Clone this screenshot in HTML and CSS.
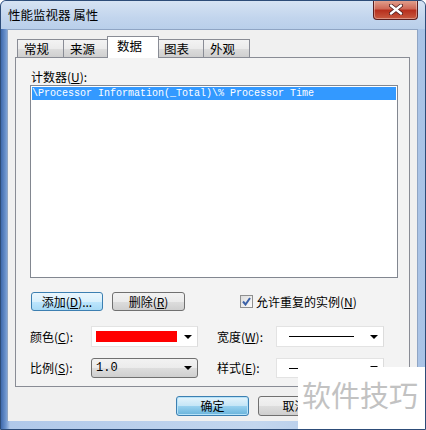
FILE: index.html
```html
<!DOCTYPE html>
<html lang="zh-CN">
<head>
    <meta charset="UTF-8">
    <title>性能监视器 属性</title>
    <link rel="stylesheet" href="styles.css">
</head>
<body>

<div class="window">
    <div class="titlebar">
        <span class="title">性能监视器 属性</span>
        <div class="close-btn">
            <svg width="14" height="11" viewBox="0 0 14 11">
                <path d="M2 1.5 L12 9.5 M12 1.5 L2 9.5" stroke="#4a1a1a" stroke-width="4" stroke-linecap="round"/>
                <path d="M2 1.5 L12 9.5 M12 1.5 L2 9.5" stroke="#fff" stroke-width="2.4" stroke-linecap="round"/>
            </svg>
        </div>
    </div>

    <div class="client">
        <div class="tabs">
            <div class="tab">常规</div>
            <div class="tab">来源</div>
            <div class="tab active">数据</div>
            <div class="tab">图表</div>
            <div class="tab">外观</div>
        </div>

        <div class="panel">
            <div class="field-label">计数器(<u>U</u>):</div>
            <div class="counter-list">
                <div class="counter-row selected">\Processor Information(_Total)\% Processor Time</div>
            </div>

            <div class="list-actions">
                <button class="btn btn-focus">添加(<u>D</u>)...</button>
                <button class="btn">删除(<u>R</u>)</button>
                <label class="check">
                    <span class="checkbox">
                        <svg width="9" height="9" viewBox="0 0 9 9">
                            <path d="M1 4.5 L3.5 7.5 L8 1" fill="none" stroke="#3c62a8" stroke-width="2"/>
                        </svg>
                    </span>
                    允许重复的实例(<u>N</u>)
                </label>
            </div>

            <div class="props">
                <span class="prop-label">颜色(<u>C</u>):</span>
                <div class="combo">
                    <span class="swatch"></span>
                    <span class="arrow"></span>
                </div>
                <span class="prop-label">宽度(<u>W</u>):</span>
                <div class="combo">
                    <span class="line-sample"></span>
                    <span class="arrow"></span>
                </div>

                <span class="prop-label">比例(<u>S</u>):</span>
                <div class="combo combo-button">
                    <span class="combo-text">1.0</span>
                    <span class="arrow"></span>
                </div>
                <span class="prop-label">样式(<u>E</u>):</span>
                <div class="combo combo-short">
                    <span class="line-sample short"></span>
                    <span class="arrow"></span>
                </div>
            </div>
        </div>

        <div class="footer">
            <button class="btn btn-default">确定</button>
            <button class="btn btn-cancel">取消</button>
        </div>
    </div>

    <!-- site watermark covering the corner -->
    <div class="watermark">软件技巧</div>
</div>

</body>
</html>
```

FILE: styles.css
```css
body {
    margin: 0;
    font-family: "Noto Sans CJK SC", "Liberation Sans", sans-serif;
    font-size: 12px;
    color: #000;
}

.window {
    position: relative;
    width: 426px;
    height: 430px;
    box-sizing: border-box;
    border: 1px solid #2d4c78;
    border-radius: 6px 6px 0 0;
    background: linear-gradient(to right, #3f6aad 0, #6f96cf 5px, #b0c8e9 9px, #c3d6ee 60%, #a9c3e6 100%);
    overflow: hidden;
}

.titlebar {
    display: flex;
    justify-content: space-between;
    align-items: flex-start;
    height: 28px;
    background: linear-gradient(to bottom, #d6e3f3, #c2d5ed 60%, #b9cfea);
}

.title {
    padding: 6px 0 0 7px;
    font-size: 12.5px;
    line-height: 16px;
}

.close-btn {
    display: flex;
    align-items: center;
    justify-content: center;
    width: 43px;
    height: 19px;
    margin: -1px 7px 0 0;
    border: 1px solid #5a1e1e;
    border-top: none;
    border-radius: 0 0 4px 4px;
    background: linear-gradient(to bottom, #e3a592 0, #cf6a58 45%, #b7301e 55%, #c85a40 100%);
    box-shadow: inset 0 0 0 1px rgba(255, 255, 255, 0.35);
}

.client {
    margin: 0 7px 0 6px;
    height: 392px;
    padding: 6px 0 0 7px;
    box-sizing: border-box;
    background: #f0f0f0;
    border: 1px solid #8fa5c4;
    border-bottom: none;
}

.tabs {
    display: flex;
    align-items: flex-end;
    height: 21px;
    padding-left: 2px;
}

.tab {
    width: 47px;
    height: 18px;
    box-sizing: border-box;
    margin-right: -1px;
    border: 1px solid #898c95;
    border-bottom: none;
    background: linear-gradient(to bottom, #f3f3f3, #ebebeb 50%, #dddddd 51%, #cfcfcf);
    font-size: 12.5px;
    line-height: 18px;
    padding-left: 6px;
}

.tab.active {
    width: 52px;
    height: 22px;
    margin: 0 -2px -1px -2px;
    padding-left: 9px;
    line-height: 17px;
    background: #fff;
    position: relative;
}

.panel {
    width: 395px;
    height: 330px;
    box-sizing: border-box;
    border: 1px solid #898c95;
    background: #f3f3f3;
    padding: 10px 11px 0 14px;
}

.field-label {
    padding-left: 1px;
    line-height: 17px;
}

.counter-list {
    width: 368px;
    height: 193px;
    box-sizing: border-box;
    border: 1px solid #828790;
    background: #fff;
    padding: 1px;
}

.counter-row {
    height: 13px;
    font-family: "Liberation Mono", "DejaVu Sans Mono", monospace;
    font-size: 10px;
    line-height: 13px;
    white-space: nowrap;
}

.counter-row.selected {
    background: #3399ff;
    color: #fff;
}

.list-actions {
    display: flex;
    align-items: center;
    margin-top: 14px;
    padding-left: 1px;
    height: 19px;
}

.btn {
    height: 19px;
    width: 73px;
    padding: 0;
    box-sizing: border-box;
    border: 1px solid #707070;
    border-radius: 3px;
    background: linear-gradient(to bottom, #f2f2f2, #ebebeb 50%, #dddddd 51%, #cfcfcf);
    font-family: "Noto Sans CJK SC", "Liberation Sans", sans-serif;
    font-size: 12px;
    line-height: 16px;
    color: #000;
}

.btn + .btn {
    margin-left: 9px;
}

.btn-focus {
    width: 72px;
    border-color: #3c7fb1;
    background: linear-gradient(to bottom, #eaf6fd, #d9f0fc 50%, #bee6fd 51%, #a7d9f5);
}

.btn-default {
    height: 20px;
    border-color: #3c7fb1;
    background: linear-gradient(to bottom, #e5f4fc, #c4e5f6 50%, #98d1ef 51%, #68b3db);
    box-shadow: inset 0 0 0 1px #b6e2f8;
}

.btn-cancel {
    height: 20px;
    margin-left: 8px;
}

.check {
    display: flex;
    align-items: center;
    margin-left: 55px;
    white-space: nowrap;
}

.checkbox {
    display: flex;
    align-items: center;
    justify-content: center;
    width: 13px;
    height: 13px;
    box-sizing: border-box;
    border: 1px solid #8e8f8f;
    background: linear-gradient(to bottom right, #dcdcdc, #fbfbfb);
    margin-right: 3px;
}

.props {
    display: grid;
    grid-template-columns: 61px 107px 19px 59px 108px;
    grid-template-rows: 21px 20px;
    row-gap: 11px;
    margin-top: 15px;
    align-items: center;
}

.props .prop-label:nth-child(3),
.props .prop-label:nth-child(7) {
    grid-column: 4;
}

.prop-label {
    line-height: 16px;
}

.combo {
    display: flex;
    align-items: center;
    justify-content: space-between;
    height: 21px;
    box-sizing: border-box;
    border: 1px solid #e3e3e3;
    border-right-color: #dcdcdc;
    background: #fff;
    padding: 0 5px 0 4px;
}

.combo-button {
    height: 20px;
    border: 1px solid #707070;
    border-radius: 3px;
    background: linear-gradient(to bottom, #f2f2f2, #ebebeb 50%, #dddddd 51%, #cfcfcf);
}

.combo-short {
    height: 20px;
}

.combo-text {
    font-family: "Liberation Mono", "DejaVu Sans Mono", monospace;
    font-size: 12px;
}

.swatch {
    width: 81px;
    height: 11px;
    background: #ff0000;
}

.line-sample {
    width: 65px;
    height: 1px;
    margin-left: 8px;
    background: #000;
}

.line-sample.short {
    width: 9px;
}

.arrow {
    width: 0;
    height: 0;
    border-left: 4px solid transparent;
    border-right: 4px solid transparent;
    border-top: 4px solid #000;
}

.footer {
    display: flex;
    margin-top: 9px;
    padding-left: 161px;
}

.watermark {
    position: absolute;
    left: 297px;
    top: 366px;
    right: 0;
    bottom: 0;
    background: #fff;
    color: #c2c2c2;
    font-size: 29px;
    line-height: 34px;
    padding: 10px 0 0 4px;
}
```
